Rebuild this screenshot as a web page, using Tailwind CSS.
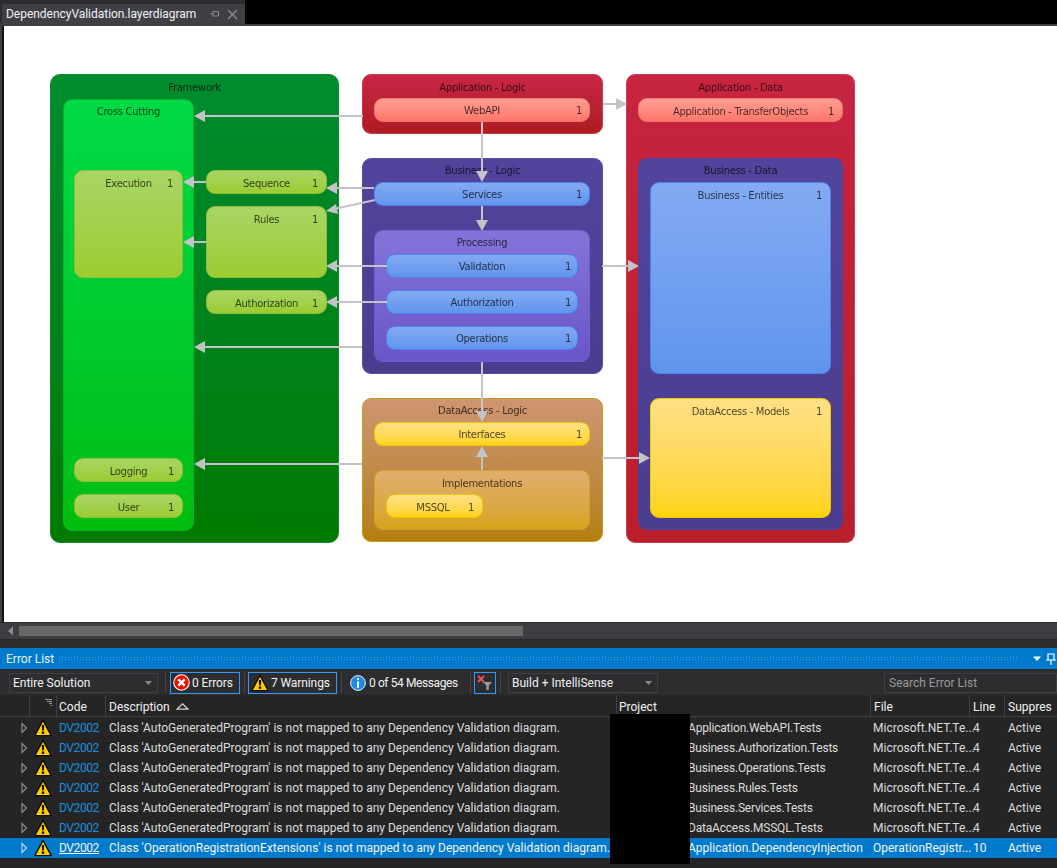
<!DOCTYPE html>
<html>
<head>
<meta charset="utf-8">
<script src="https://cdn.jsdelivr.net/npm/@tailwindcss/browser@4"></script>
</head>
<body class="m-0 overflow-hidden bg-[#252526]">
<svg class="absolute w-0 h-0">
  <defs>
    <symbol id="warn" viewBox="0 0 18 18">
      <path d="M9 1.4 L17.2 16.6 L0.8 16.6 Z" fill="#ffcc00" stroke="#0c0c0c" stroke-width="1.3" stroke-linejoin="round"/>
      <path d="M7.8 6 H10.2 L9.8 11.6 H8.2 Z" fill="#0c0c0c"/>
      <rect x="7.8" y="12.5" width="2.4" height="2.4" fill="#0c0c0c"/>
    </symbol>
    <symbol id="chev" viewBox="0 0 8 12">
      <path d="M2 1.5 L6.5 6 L2 10.5 Z" fill="none" stroke="#8a8a8a" stroke-width="1.2"/>
    </symbol>
    <symbol id="chevsel" viewBox="0 0 8 12">
      <path d="M2 1.5 L6.5 6 L2 10.5 Z" fill="none" stroke="#b8d4ea" stroke-width="1.2"/>
    </symbol>
  </defs>
</svg>
<div class="relative w-[1057px] h-[868px] overflow-hidden flex flex-col bg-[#2d2d30] font-['Roboto','Noto_Sans',sans-serif]">

  <!-- Document tab strip -->
  <div class="h-[26px] flex flex-col bg-[#3f3f46]">
    <div class="h-[24px] flex bg-black">
      <div class="w-[245px] bg-[#2d2d30] pt-[4px] pl-[2px]">
        <div class="h-[20px] flex items-center bg-[#3f3f46] pl-[4px] text-[12px] text-[#f1f1f1]">
          <span class="w-[204px] tracking-[-0.03px]">DependencyValidation.layerdiagram</span>
          <svg width="10" height="10" viewBox="0 0 10 10" class="mr-[7px]"><path d="M0 5 H3 M3 2.5 V7.5 M3 2.5 H8.5 V7 H3" fill="none" stroke="#8a8a90" stroke-width="1"/></svg>
          <svg width="11" height="11" viewBox="0 0 11 11"><path d="M1 1 L10 10 M10 1 L1 10" stroke="#8a8a90" stroke-width="1.4"/></svg>
        </div>
      </div>
    </div>
  </div>

  <!-- Diagram canvas -->
  <div class="h-[596px] flex">
    <div class="w-[4px] flex"><div class="w-[2px] bg-[#3f3f46]"></div><div class="w-[2px] bg-[#111]"></div></div>
    <div class="relative flex-1 bg-white overflow-hidden">
      <div class="absolute left-[-4px] top-[-26px] w-[1057px] h-[868px] blur-[0.35px] text-[10px] leading-[26px] text-center text-black/70 font-['DejaVu_Sans',sans-serif] tracking-[-0.03em]">
        <!-- Framework -->
        <div class="absolute left-[50px] top-[74px] w-[289px] h-[469px] rounded-[10px] border border-[#0a8a2a] bg-gradient-to-b from-[#008c2e] to-[#007a00]">Framework</div>
        <div class="absolute left-[63px] top-[99px] w-[131px] h-[432px] rounded-[9px] border border-[#00b530] bg-gradient-to-b from-[#00da45] to-[#00bd0c] leading-[24px]">Cross Cutting</div>
        <div class="absolute left-[74px] top-[170px] w-[109px] h-[108px] rounded-[9px] border border-[#8fbf3f] bg-gradient-to-b from-[#a9d563] to-[#9ccc2f]">Execution<span class="absolute right-[9px] top-0">1</span></div>
        <div class="absolute left-[206px] top-[170px] w-[121px] h-[24px] rounded-[9px] border border-[#8fbf3f] bg-gradient-to-b from-[#a9d563] to-[#9ccc2f]">Sequence<span class="absolute right-[8px] top-0">1</span></div>
        <div class="absolute left-[206px] top-[206px] w-[121px] h-[72px] rounded-[9px] border border-[#8fbf3f] bg-gradient-to-b from-[#a9d563] to-[#9ccc2f]">Rules<span class="absolute right-[8px] top-0">1</span></div>
        <div class="absolute left-[206px] top-[290px] w-[121px] h-[24px] rounded-[9px] border border-[#8fbf3f] bg-gradient-to-b from-[#a9d563] to-[#9ccc2f]">Authorization<span class="absolute right-[8px] top-0">1</span></div>
        <div class="absolute left-[74px] top-[458px] w-[109px] h-[24px] rounded-[9px] border border-[#8fbf3f] bg-gradient-to-b from-[#a9d563] to-[#9ccc2f]">Logging<span class="absolute right-[8px] top-0">1</span></div>
        <div class="absolute left-[74px] top-[494px] w-[109px] h-[24px] rounded-[9px] border border-[#8fbf3f] bg-gradient-to-b from-[#a9d563] to-[#9ccc2f]">User<span class="absolute right-[8px] top-0">1</span></div>

        <!-- Application - Logic -->
        <div class="absolute left-[362px] top-[74px] w-[241px] h-[60px] rounded-[9px] border border-[#c04050] bg-gradient-to-b from-[#c82646] to-[#ae1c20]">Application - Logic</div>
        <div class="absolute left-[374px] top-[98px] w-[216px] h-[24px] rounded-[9px] border border-[#ee7a70] bg-gradient-to-b from-[#ff9e94] to-[#ff766a] leading-[24px]">WebAPI<span class="absolute right-[7px] top-0">1</span></div>

        <!-- Business - Logic -->
        <div class="absolute left-[362px] top-[158px] w-[241px] h-[216px] rounded-[9px] border border-[#5a4ea0] bg-gradient-to-b from-[#52449c] to-[#4a3c8e] leading-[24px]">Business - Logic</div>
        <div class="absolute left-[374px] top-[182px] w-[216px] h-[24px] rounded-[9px] border border-[#4d82ee] bg-gradient-to-b from-[#83aaf2] to-[#6095ee] leading-[24px]">Services<span class="absolute right-[7px] top-0">1</span></div>
        <div class="absolute left-[374px] top-[230px] w-[216px] h-[132px] rounded-[9px] border border-[#6f5fd0] bg-gradient-to-b from-[#8573da] to-[#6a55c8] leading-[24px]">Processing</div>
        <div class="absolute left-[386px] top-[254px] w-[192px] h-[24px] rounded-[9px] border border-[#4d82ee] bg-gradient-to-b from-[#83aaf2] to-[#6095ee] leading-[24px]">Validation<span class="absolute right-[6px] top-0">1</span></div>
        <div class="absolute left-[386px] top-[290px] w-[192px] h-[24px] rounded-[9px] border border-[#4d82ee] bg-gradient-to-b from-[#83aaf2] to-[#6095ee] leading-[24px]">Authorization<span class="absolute right-[6px] top-0">1</span></div>
        <div class="absolute left-[386px] top-[326px] w-[192px] h-[24px] rounded-[9px] border border-[#4d82ee] bg-gradient-to-b from-[#83aaf2] to-[#6095ee] leading-[24px]">Operations<span class="absolute right-[6px] top-0">1</span></div>

        <!-- DataAccess - Logic -->
        <div class="absolute left-[362px] top-[398px] w-[241px] h-[144px] rounded-[9px] border border-[#c49a20] bg-gradient-to-b from-[#cf9570] to-[#b37f08] leading-[24px]">DataAccess - Logic</div>
        <div class="absolute left-[374px] top-[422px] w-[216px] h-[24px] rounded-[9px] border border-[#f0c800] bg-gradient-to-b from-[#ffe084] to-[#ffd400] leading-[24px]">Interfaces<span class="absolute right-[7px] top-0">1</span></div>
        <div class="absolute left-[374px] top-[470px] w-[216px] h-[60px] rounded-[9px] border border-[#d0a030] bg-gradient-to-b from-[#e0ae6c] to-[#d8a316]">Implementations</div>
        <div class="absolute left-[386px] top-[494px] w-[97px] h-[24px] rounded-[9px] border border-[#f0c800] bg-gradient-to-b from-[#ffe084] to-[#ffd400] pr-[3px]">MSSQL<span class="absolute right-[8px] top-0">1</span></div>

        <!-- Application - Data -->
        <div class="absolute left-[626px] top-[74px] w-[229px] h-[469px] rounded-[9px] border border-[#c84058] bg-gradient-to-b from-[#c72440] to-[#b81f2a]">Application - Data</div>
        <div class="absolute left-[638px] top-[98px] w-[205px] h-[24px] rounded-[9px] border border-[#ee7a70] bg-gradient-to-b from-[#ff9e94] to-[#ff766a]">Application - TransferObjects<span class="absolute right-[8px] top-0">1</span></div>
        <div class="absolute left-[638px] top-[158px] w-[205px] h-[372px] rounded-[9px] border border-[#4b3fa0] bg-gradient-to-b from-[#52449c] to-[#4a3c8e] leading-[24px]">Business - Data</div>
        <div class="absolute left-[650px] top-[182px] w-[181px] h-[192px] rounded-[9px] border border-[#4d82ee] bg-gradient-to-b from-[#83aaf2] to-[#6095ee]">Business - Entities<span class="absolute right-[8px] top-0">1</span></div>
        <div class="absolute left-[650px] top-[398px] w-[181px] h-[120px] rounded-[9px] border border-[#f0c800] bg-gradient-to-b from-[#ffe084] to-[#ffd400]">DataAccess - Models<span class="absolute right-[8px] top-0">1</span></div>

        <!-- Dependency arrows -->
        <svg class="absolute left-0 top-0" width="1057" height="868" viewBox="0 0 1057 868">
          <g stroke="#c4c4c8" stroke-width="2" fill="none">
            <path d="M363 116 H200"/><path d="M206 182 H190"/><path d="M206 242 H190"/>
            <path d="M374 188 H334"/><path d="M375 200 L334 209"/><path d="M387 266 H334"/>
            <path d="M387 302 H334"/><path d="M362 347 H200"/><path d="M362 464 H200"/>
            <path d="M482 122 V174"/><path d="M482 206 V222"/><path d="M603 104 H618"/>
            <path d="M602 266 H630"/><path d="M482 362 V414"/><path d="M482 470 V454"/><path d="M602 458 H642"/>
          </g>
          <g fill="#c4c4c8">
            <path d="M194 116 L205 110 V122 Z"/>
            <path d="M183 182 L194 176 V188 Z"/>
            <path d="M183 242 L194 236 V248 Z"/>
            <path d="M326 188 L337 182 V194 Z"/>
            <path d="M326 211 L336 204 L338 214 Z"/>
            <path d="M326 266 L337 260 V272 Z"/>
            <path d="M326 302 L337 296 V308 Z"/>
            <path d="M194 347 L205 341 V353 Z"/>
            <path d="M194 464 L205 458 V470 Z"/>
            <path d="M482 182 L476 171 H488 Z"/>
            <path d="M482 231 L476 220 H488 Z"/>
            <path d="M627 104 L616 98 V110 Z"/>
            <path d="M639 266 L628 260 V272 Z"/>
            <path d="M482 422 L476 411 H488 Z"/>
            <path d="M482 446 L476 457 H488 Z"/>
            <path d="M650 458 L639 452 V464 Z"/>
          </g>
        </svg>
      </div>
    </div>
  </div>

  <!-- Horizontal scrollbar -->
  <div class="h-[18px] flex items-center bg-[#3e3e42] border-t border-b border-[#2a2a2c]">
    <svg width="19" height="12" viewBox="0 0 19 12"><path d="M8 6 L13 1.5 V10.5 Z" fill="#8f8f92"/></svg>
    <div class="w-[504px] h-[10px] bg-[#686868]"></div>
  </div>
  <div class="h-[8px] bg-[#2d2d30]"></div>

  <!-- Error list -->
  <div class="relative flex-1 flex flex-col">
    <div class="h-[21px] flex items-center bg-[#007acc] pl-[6px] text-[12px] text-[#e8f2fa]">
      <span class="w-[52px]">Error List</span>
      <div class="w-[964px] h-[5px] bg-[radial-gradient(#5aaee0_0.7px,transparent_0.8px)] bg-[length:3px_2.5px]"></div>
      <svg width="10" height="6" viewBox="0 0 10 6" class="ml-[13px]"><path d="M1 0.5 H9 L5 5 Z" fill="#fff"/></svg>
      <svg width="12" height="12" viewBox="0 0 12 12" class="ml-[3px] shrink-0"><path d="M3 1 H9 V7 H3 Z M1 7 H11 M6 7 V12" fill="none" stroke="#fff" stroke-width="1.2"/></svg>
    </div>

    <!-- Toolbar -->
    <div class="h-[26px] flex items-center text-[12px] text-[#f1f1f1] bg-[#2d2d30] pl-[9px] pt-px">
      <div class="w-[149px] h-[20px] flex items-center justify-between pl-[3px] pr-[5px] border border-[#3f3f46]">
        <span>Entire Solution</span>
        <svg width="7" height="4" viewBox="0 0 7 4"><path d="M0 0 H7 L3.5 4 Z" fill="#888"/></svg>
      </div>
      <div class="w-px h-[20px] bg-[#46464a] ml-[7px]"></div>
      <div class="ml-[4px] w-[70px] h-[22px] flex items-center border border-[#3399ff] pl-[2px] gap-[2px]">
        <svg width="17" height="17" viewBox="0 0 16 16"><circle cx="8" cy="8" r="7.3" fill="#e51400" stroke="#fff" stroke-width="1"/><path d="M5 5 L11 11 M11 5 L5 11" stroke="#fff" stroke-width="2.2"/></svg>
        <span class="tracking-[-0.1px]">0 Errors</span>
      </div>
      <div class="w-px h-[20px] bg-[#46464a] ml-[4px]"></div>
      <div class="ml-[3px] w-[89px] h-[22px] flex items-center border border-[#3399ff] pl-[2px] gap-[2px]">
        <svg width="18" height="18"><use href="#warn"/></svg>
        <span class="tracking-[-0.1px]">7 Warnings</span>
      </div>
      <div class="w-px h-[20px] bg-[#46464a] ml-[4px]"></div>
      <div class="ml-[8px] h-[22px] flex items-center gap-[3px]">
        <svg width="16" height="16" viewBox="0 0 16 16"><circle cx="8" cy="8" r="7.4" fill="#1c8ae6" stroke="#fff" stroke-width="0.9"/><rect x="7" y="3" width="2" height="2" fill="#fff"/><rect x="7" y="6.4" width="2" height="6.4" fill="#fff"/></svg>
        <span class="w-[91px] whitespace-nowrap tracking-[-0.4px]">0 of 54 Messages</span>
      </div>
      <div class="w-px h-[20px] bg-[#46464a] ml-[10px]"></div>
      <div class="ml-[3px] w-[22px] h-[22px] flex items-center justify-center border border-[#3399ff]">
        <svg width="16" height="15" viewBox="0 0 16 15"><path d="M1 1 L7 7 M7 1 L1 7" stroke="#e85050" stroke-width="2"/><path d="M6 7 H15 L11.8 10.5 V15 H9.3 V10.5 Z" fill="#9a9a9a"/></svg>
      </div>
      <div class="w-px h-[20px] bg-[#46464a] ml-[4px]"></div>
      <div class="ml-[7px] w-[150px] h-[20px] flex items-center justify-between pl-[3px] pr-[5px] border border-[#3f3f46]">
        <span>Build + IntelliSense</span>
        <svg width="7" height="4" viewBox="0 0 7 4"><path d="M0 0 H7 L3.5 4 Z" fill="#888"/></svg>
      </div>
      <div class="ml-[226px] flex-1 h-[20px] flex items-center pl-[4px] border border-[#3f3f46] text-[#999]">Search Error List</div>
    </div>

    <!-- Column header -->
    <div class="h-[22px] flex items-center text-[12px] text-[#f1f1f1] bg-[#252526] border-b border-[#3f3f46]">
      <div class="w-[29px] h-full"></div>
      <div class="w-[27px] h-full border-l border-[#3f3f46] relative">
        <svg class="absolute right-[4px] top-[4px]" width="7" height="7" viewBox="0 0 7 7"><path d="M0 0.5 H7 M2 2.5 H7 M4 4.5 H7 M5.5 6.5 H7" stroke="#999" stroke-width="1"/></svg>
      </div>
      <div class="w-[49px] h-full flex items-center border-l border-[#3f3f46] pl-[2px] pt-[2px]">Code</div>
      <div class="w-[511px] h-full flex items-center border-l border-[#3f3f46] pl-[3px] gap-[6px] pt-[2px]">Description
        <svg width="13" height="7" viewBox="0 0 13 7"><path d="M6.5 0.8 L12 6.2 H1 Z" fill="none" stroke="#d0d0d0" stroke-width="1.2"/></svg>
      </div>
      <div class="w-[254px] h-full flex items-center border-l border-[#3f3f46] pl-[2px] pt-[2px]">Project</div>
      <div class="w-[99px] h-full flex items-center border-l border-[#3f3f46] pl-[3px] pt-[2px]">File</div>
      <div class="w-[35px] h-full flex items-center border-l border-[#3f3f46] pl-[3px] pt-[2px]">Line</div>
      <div class="flex-1 h-full flex items-center border-l border-[#3f3f46] pl-[3px] pt-[2px]">Suppres</div>
    </div>

    <!-- Rows -->
    <div class="flex-1 bg-[#252526] text-[12px] text-[#dcdcdc] pt-[1px]">
      <div class="h-[20px] grid grid-cols-[59px_50px_579px_185px_100px_35px_1fr] items-center whitespace-nowrap overflow-hidden">
        <div class="flex items-center pl-[20px] gap-[6px]"><svg width="8" height="12"><use href="#chev"/></svg><svg width="18" height="18"><use href="#warn"/></svg></div>
        <span class="text-[#1b8fdd] tracking-[-0.4px]">DV2002</span><span>Class 'AutoGeneratedProgram' is not mapped to any Dependency Validation diagram.</span><span class="tracking-[-0.2px]">Application.WebAPI.Tests</span><span>Microsoft.NET.Te...</span><span>4</span><span>Active</span>
      </div>
      <div class="h-[20px] grid grid-cols-[59px_50px_579px_185px_100px_35px_1fr] items-center whitespace-nowrap overflow-hidden">
        <div class="flex items-center pl-[20px] gap-[6px]"><svg width="8" height="12"><use href="#chev"/></svg><svg width="18" height="18"><use href="#warn"/></svg></div>
        <span class="text-[#1b8fdd] tracking-[-0.4px]">DV2002</span><span>Class 'AutoGeneratedProgram' is not mapped to any Dependency Validation diagram.</span><span class="tracking-[-0.2px]">Business.Authorization.Tests</span><span>Microsoft.NET.Te...</span><span>4</span><span>Active</span>
      </div>
      <div class="h-[20px] grid grid-cols-[59px_50px_579px_185px_100px_35px_1fr] items-center whitespace-nowrap overflow-hidden">
        <div class="flex items-center pl-[20px] gap-[6px]"><svg width="8" height="12"><use href="#chev"/></svg><svg width="18" height="18"><use href="#warn"/></svg></div>
        <span class="text-[#1b8fdd] tracking-[-0.4px]">DV2002</span><span>Class 'AutoGeneratedProgram' is not mapped to any Dependency Validation diagram.</span><span class="tracking-[-0.2px]">Business.Operations.Tests</span><span>Microsoft.NET.Te...</span><span>4</span><span>Active</span>
      </div>
      <div class="h-[20px] grid grid-cols-[59px_50px_579px_185px_100px_35px_1fr] items-center whitespace-nowrap overflow-hidden">
        <div class="flex items-center pl-[20px] gap-[6px]"><svg width="8" height="12"><use href="#chev"/></svg><svg width="18" height="18"><use href="#warn"/></svg></div>
        <span class="text-[#1b8fdd] tracking-[-0.4px]">DV2002</span><span>Class 'AutoGeneratedProgram' is not mapped to any Dependency Validation diagram.</span><span class="tracking-[-0.2px]">Business.Rules.Tests</span><span>Microsoft.NET.Te...</span><span>4</span><span>Active</span>
      </div>
      <div class="h-[20px] grid grid-cols-[59px_50px_579px_185px_100px_35px_1fr] items-center whitespace-nowrap overflow-hidden">
        <div class="flex items-center pl-[20px] gap-[6px]"><svg width="8" height="12"><use href="#chev"/></svg><svg width="18" height="18"><use href="#warn"/></svg></div>
        <span class="text-[#1b8fdd] tracking-[-0.4px]">DV2002</span><span>Class 'AutoGeneratedProgram' is not mapped to any Dependency Validation diagram.</span><span class="tracking-[-0.2px]">Business.Services.Tests</span><span>Microsoft.NET.Te...</span><span>4</span><span>Active</span>
      </div>
      <div class="h-[20px] grid grid-cols-[59px_50px_579px_185px_100px_35px_1fr] items-center whitespace-nowrap overflow-hidden">
        <div class="flex items-center pl-[20px] gap-[6px]"><svg width="8" height="12"><use href="#chev"/></svg><svg width="18" height="18"><use href="#warn"/></svg></div>
        <span class="text-[#1b8fdd] tracking-[-0.4px]">DV2002</span><span>Class 'AutoGeneratedProgram' is not mapped to any Dependency Validation diagram.</span><span class="tracking-[-0.2px]">DataAccess.MSSQL.Tests</span><span>Microsoft.NET.Te...</span><span>4</span><span>Active</span>
      </div>
      <div class="h-[20px] grid grid-cols-[59px_50px_579px_185px_100px_35px_1fr] items-center whitespace-nowrap overflow-hidden bg-[#007acc] text-[#f4f4f4]">
        <div class="flex items-center pl-[20px] gap-[6px]"><svg width="8" height="12"><use href="#chevsel"/></svg><svg width="18" height="18"><use href="#warn"/></svg></div>
        <span class="underline tracking-[-0.4px]">DV2002</span><span>Class 'OperationRegistrationExtensions' is not mapped to any Dependency Validation diagram.</span><span>Application.DependencyInjection</span><span>OperationRegistr...</span><span>10</span><span>Active</span>
      </div>
    </div>

    <!-- Redaction block -->
    <div class="absolute left-[610px] top-[66px] w-[80px] h-[150px] bg-black"></div>
  </div>
</div>
</body>
</html>
